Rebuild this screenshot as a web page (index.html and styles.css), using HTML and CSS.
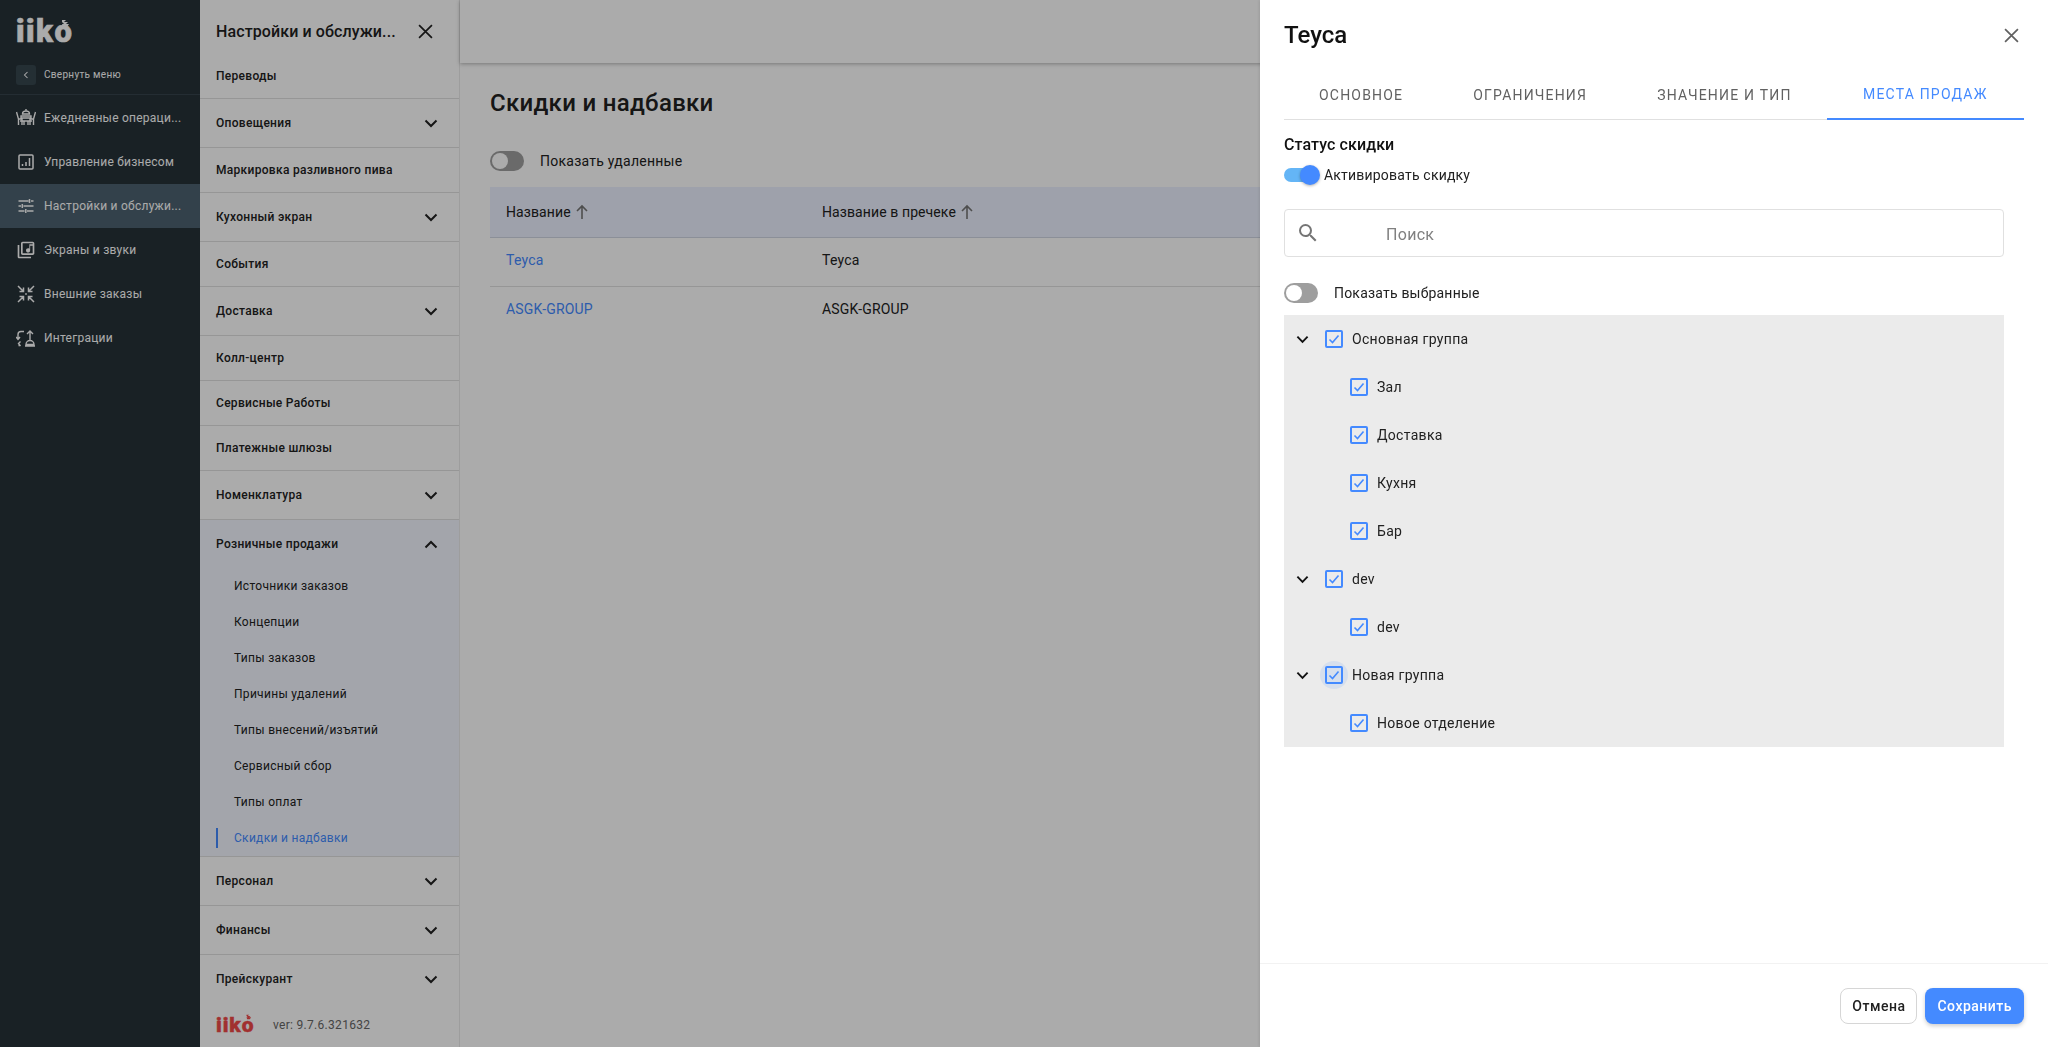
FILE: index.html
```html
<!DOCTYPE html>
<html lang="ru">

<head>
    <meta charset="UTF-8">
    <title>Скидки и надбавки</title>
    <link rel="stylesheet" href="styles.css">
</head>

<body>
    <svg class="sprite" width="0" height="0">
        <symbol id="chevron-down" viewBox="0 0 14 9">
            <path d="M1.5 1.5 7 7l5.5-5.5" fill="none" stroke="currentColor" stroke-width="2" />
        </symbol>
        <symbol id="chevron-up" viewBox="0 0 14 9">
            <path d="M1.5 7.5 7 2l5.5 5.5" fill="none" stroke="currentColor" stroke-width="2" />
        </symbol>
        <symbol id="cross" viewBox="0 0 14 14">
            <path d="M1 1l12 12M13 1 1 13" fill="none" stroke="currentColor" stroke-width="1.6" />
        </symbol>
        <symbol id="check" viewBox="0 0 14 14">
            <path d="M2.5 7.5l3 3 6-7" fill="none" stroke="currentColor" stroke-width="1.6" />
        </symbol>
        <symbol id="arrow-up" viewBox="0 0 14 16">
            <path d="M7 15V2M2 7l5-5 5 5" fill="none" stroke="currentColor" stroke-width="1.6" />
        </symbol>
        <symbol id="logo-mark" viewBox="0 0 10 12">
            <path d="M2 1h4L4 3h4L6 5h3L7 8H3L2 5h2L2 3z" fill="currentColor" />
        </symbol>
    </svg>

    <div class="app">
        <aside class="sidebar">
            <div class="logo">iiko<svg class="logo-mark"><use href="#logo-mark" /></svg></div>
            <div class="collapse">
                <span class="collapse-btn"><svg viewBox="0 0 8 10" width="6" height="8">
                        <path d="M6 1 2 5l4 4" fill="none" stroke="currentColor" stroke-width="1.4" /></svg></span>
                <span>Свернуть меню</span>
            </div>
            <nav class="side-nav">
                <a class="side-item">
                    <svg class="side-icon" viewBox="0 0 20 20">
                        <path d="M10 1v2M6.5 6a3.5 3 0 0 1 7 0zM5 8h10v2H5zM0.5 4l2 7v6M19.5 4l-2 7v6M2.500 11H6v6M17.500 11H14v6M4 13h12M8 13v4M12 13v4" fill="none" stroke="currentColor" stroke-width="1.4" />
                    </svg>
                    <span class="side-label">Ежедневные операци...</span>
                </a>
                <a class="side-item">
                    <svg class="side-icon" viewBox="0 0 20 20">
                        <rect x="3" y="3" width="14" height="14" rx="1" fill="none" stroke="currentColor" stroke-width="1.500" />
                        <path d="M6.500 12v2M10 10v4M13.500 6v8" fill="none" stroke="currentColor" stroke-width="1.500" />
                    </svg>
                    <span class="side-label">Управление бизнесом</span>
                </a>
                <a class="side-item active">
                    <svg class="side-icon" viewBox="0 0 20 20">
                        <path d="M2.500 5h10M15 5h2.500M2.500 10H5M7.500 10h10M2.500 15h6M11 15h6.500M13.500 3v4M6.300 8v4M9.800 13v4" fill="none" stroke="currentColor" stroke-width="1.500" />
                    </svg>
                    <span class="side-label">Настройки и обслужи...</span>
                </a>
                <a class="side-item">
                    <svg class="side-icon" viewBox="0 0 24 24">
                        <path d="M20 2H8c-1.100 0-2 .9-2 2v12c0 1.100.9 2 2 2h12c1.100 0 2-.9 2-2V4c0-1.100-.9-2-2-2zm0 14H8V4h12v12zm-5.500-1c1.380 0 2.500-1.120 2.500-2.500V7h3V5h-4v5.510c-.42-.32-.93-.51-1.500-.51-1.380 0-2.500 1.120-2.500 2.500s1.120 2.500 2.500 2.500zM4 6H2v14c0 1.100.9 2 2 2h14v-2H4V6z" fill="currentColor" />
                    </svg>
                    <span class="side-label">Экраны и звуки</span>
                </a>
                <a class="side-item">
                    <svg class="side-icon" viewBox="0 0 20 20">
                        <path d="M2 2l5.500 5.500M7.500 3.500v4h-4M18 2l-5.500 5.500M12.500 3.500v4h4M2 18l5.500-5.500M7.500 16.500v-4h-4M18 18l-5.500-5.500M12.500 16.500v-4h4" fill="none" stroke="currentColor" stroke-width="1.500" />
                        <rect x="9.200" y="9.200" width="1.600" height="1.600" fill="currentColor" />
                    </svg>
                    <span class="side-label">Внешние заказы</span>
                </a>
                <a class="side-item">
                    <svg class="side-icon" viewBox="0 0 20 20">
                        <path d="M8 3.500H5a3 3 0 0 0-3 3V11M0 9l2 2.500L4 9M4 17.500H2.500M10 16.500a4 4 0 0 1 8 0zM9 18h10M14 12.500V3M11 6l3-3 3 3M4.500 13.500l-2 2 2 2.500" fill="none" stroke="currentColor" stroke-width="1.400" />
                    </svg>
                    <span class="side-label">Интеграции</span>
                </a>
            </nav>
        </aside>

        <section class="subnav">
            <div class="subnav-head">
                <span class="subnav-title">Настройки и обслужи...</span>
                <svg class="subnav-close"><use href="#cross" /></svg>
            </div>
            <div class="row">Переводы</div>
            <div class="row tall">Оповещения<svg class="chevron"><use href="#chevron-down" /></svg></div>
            <div class="row">Маркировка разливного пива</div>
            <div class="row tall">Кухонный экран<svg class="chevron"><use href="#chevron-down" /></svg></div>
            <div class="row">События</div>
            <div class="row tall">Доставка<svg class="chevron"><use href="#chevron-down" /></svg></div>
            <div class="row">Колл-центр</div>
            <div class="row">Сервисные Работы</div>
            <div class="row">Платежные шлюзы</div>
            <div class="row tall">Номенклатура<svg class="chevron"><use href="#chevron-down" /></svg></div>
            <div class="group">
                <div class="row tall open">Розничные продажи<svg class="chevron"><use href="#chevron-up" /></svg></div>
                <a class="sub-row">Источники заказов</a>
                <a class="sub-row">Концепции</a>
                <a class="sub-row">Типы заказов</a>
                <a class="sub-row">Причины удалений</a>
                <a class="sub-row">Типы внесений/изъятий</a>
                <a class="sub-row">Сервисный сбор</a>
                <a class="sub-row">Типы оплат</a>
                <a class="sub-row current">Скидки и надбавки</a>
            </div>
            <div class="row tall">Персонал<svg class="chevron"><use href="#chevron-down" /></svg></div>
            <div class="row tall">Финансы<svg class="chevron"><use href="#chevron-down" /></svg></div>
            <div class="row tall last">Прейскурант<svg class="chevron"><use href="#chevron-down" /></svg></div>
            <div class="subnav-foot">
                <span class="foot-logo">iiko<svg class="foot-mark"><use href="#logo-mark" /></svg></span>
                <span>ver: 9.7.6.321632</span>
            </div>
        </section>

        <main class="content">
            <div class="topbar"></div>
            <div class="page">
                <h1 class="page-title">Скидки и надбавки</h1>
                <label class="switch-line">
                    <span class="switch"></span>
                    <span>Показать удаленные</span>
                </label>
                <table class="grid">
                    <thead>
                        <tr>
                            <th class="col-name">Название<svg class="sort"><use href="#arrow-up" /></svg></th>
                            <th>Название в пречеке<svg class="sort"><use href="#arrow-up" /></svg></th>
                        </tr>
                    </thead>
                    <tbody>
                        <tr>
                            <td><a class="link">Теуса</a></td>
                            <td>Теуса</td>
                        </tr>
                        <tr>
                            <td><a class="link">ASGK-GROUP</a></td>
                            <td>ASGK-GROUP</td>
                        </tr>
                    </tbody>
                </table>
            </div>
        </main>
    </div>

    <div class="scrim"></div>

    <aside class="drawer">
        <header class="drawer-head">
            <h2 class="drawer-title">Теуса</h2>
            <svg class="drawer-close"><use href="#cross" /></svg>
        </header>
        <div class="tabs">
            <a class="tab">Основное</a>
            <a class="tab">Ограничения</a>
            <a class="tab">Значение и тип</a>
            <a class="tab selected">Места продаж</a>
        </div>
        <div class="drawer-body">
            <h3 class="status-title">Статус скидки</h3>
            <label class="status-line">
                <span class="switch-on"></span>
                <span>Активировать скидку</span>
            </label>
            <div class="search">
                <svg class="search-icon" viewBox="0 0 24 24">
                    <path d="M15.500 14h-.79l-.28-.27A6.470 6.470 0 0 0 16 9.500 6.500 6.500 0 1 0 9.500 16c1.610 0 3.090-.59 4.230-1.570l.27.28v.79l5 4.990L20.490 19l-4.990-5zm-6 0C7.010 14 5 11.990 5 9.500S7.010 5 9.500 5 14 7.010 14 9.500 11.990 14 9.500 14z" fill="currentColor" />
                </svg>
                <span class="search-text">Поиск</span>
            </div>
            <label class="selected-line">
                <span class="switch"></span>
                <span>Показать выбранные</span>
            </label>
            <div class="tree">
                <div class="tree-row">
                    <svg class="tree-chevron"><use href="#chevron-down" /></svg>
                    <span class="box"><svg><use href="#check" /></svg></span>Основная группа
                </div>
                <div class="tree-row child"><span class="box"><svg><use href="#check" /></svg></span>Зал</div>
                <div class="tree-row child"><span class="box"><svg><use href="#check" /></svg></span>Доставка</div>
                <div class="tree-row child"><span class="box"><svg><use href="#check" /></svg></span>Кухня</div>
                <div class="tree-row child"><span class="box"><svg><use href="#check" /></svg></span>Бар</div>
                <div class="tree-row">
                    <svg class="tree-chevron"><use href="#chevron-down" /></svg>
                    <span class="box"><svg><use href="#check" /></svg></span>dev
                </div>
                <div class="tree-row child"><span class="box"><svg><use href="#check" /></svg></span>dev</div>
                <div class="tree-row">
                    <svg class="tree-chevron"><use href="#chevron-down" /></svg>
                    <span class="box focused"><svg><use href="#check" /></svg></span>Новая группа
                </div>
                <div class="tree-row child"><span class="box"><svg><use href="#check" /></svg></span>Новое отделение</div>
            </div>
        </div>
        <footer class="drawer-foot">
            <button class="btn">Отмена</button>
            <button class="btn primary">Сохранить</button>
        </footer>
    </aside>
</body>

</html>
```

FILE: styles.css
```css
html,
body {
    margin: 0;
    padding: 0;
    height: 100%;
    overflow: hidden;
}

body {
    font-family: Roboto, "Liberation Sans", sans-serif;
    font-size: 14px;
    color: #212121;
    background: #fff;
}

.sprite {
    position: absolute;
}

.app {
    display: flex;
    height: 1047px;
}

/* left dark menu */
.sidebar {
    width: 200px;
    flex: none;
    background: #263238;
    color: #fff;
}

.logo {
    height: 65px;
    padding: 14px 0 0 16px;
    box-sizing: border-box;
    font-weight: 900;
    font-size: 31px;
    line-height: 35px;
    letter-spacing: 1.5px;
    -webkit-text-stroke: 0.6px #fff;
    position: relative;
}

.logo-mark {
    position: absolute;
    left: 60px;
    top: 19px;
    width: 10px;
    height: 12px;
}

.collapse {
    display: flex;
    align-items: center;
    gap: 8px;
    height: 30px;
    padding: 0 0 9px 16px;
    font-size: 10px;
    letter-spacing: 0.3px;
    line-height: 20px;
    border-bottom: 1px solid #36444d;
    box-sizing: border-box;
    color: #fff;
}

.collapse-btn {
    display: flex;
    align-items: center;
    justify-content: center;
    width: 20px;
    height: 20px;
    background: #36464e;
    border-radius: 3px;
}

.side-nav {
    padding-top: 1px;
}

.side-item {
    display: flex;
    align-items: center;
    height: 44px;
    padding-left: 16px;
    color: #fff;
}

.side-item.active {
    background: #4d6270;
}

.side-icon {
    width: 20px;
    height: 20px;
    flex: none;
    margin-right: 8px;
}

.side-label {
    white-space: nowrap;
    font-size: 12px;
    letter-spacing: 0.25px;
}

/* second column */
.subnav {
    width: 260px;
    flex: none;
    border-right: 1px solid #eaeaea;
    box-sizing: border-box;
    background: #fff;
    display: flex;
    flex-direction: column;
}

.subnav-head {
    display: flex;
    align-items: center;
    justify-content: space-between;
    height: 54px;
    padding: 9px 26px 0 16px;
    box-sizing: border-box;
}

.subnav-title {
    white-space: nowrap;
    font-size: 16px;
    font-weight: 500;
    letter-spacing: 0.1px;
}

.subnav-close {
    width: 15px;
    height: 15px;
    color: #212121;
}

.row {
    display: flex;
    align-items: center;
    justify-content: space-between;
    height: 45px;
    box-sizing: border-box;
    padding: 0 16px;
    border-bottom: 1px solid #e0e0e0;
    font-size: 12px;
    font-weight: 500;
    letter-spacing: 0.3px;
}

.row.tall {
    height: 49px;
}

.row.open {
    border-bottom: 0;
    height: 48px;
}

.row.last {
    border-bottom: 0;
    height: 48px;
}

.chevron {
    width: 14px;
    height: 9px;
    margin-right: 5px;
    color: #212121;
}

.group {
    background: #f3f7ff;
    border-bottom: 1px solid #e0e0e0;
    height: 337px;
    box-sizing: border-box;
}

.sub-row {
    display: flex;
    align-items: center;
    height: 36px;
    padding-left: 34px;
    font-size: 12px;
    letter-spacing: 0.3px;
    position: relative;
}

.sub-row.current {
    color: #448aff;
}

.sub-row.current::before {
    content: "";
    position: absolute;
    left: 16px;
    top: 8px;
    width: 2px;
    height: 20px;
    background: #448aff;
}

.subnav-foot {
    display: flex;
    align-items: center;
    height: 44px;
    padding-left: 16px;
    font-size: 12px;
    letter-spacing: 0.3px;
    color: #666;
}

.foot-logo {
    position: relative;
    width: 57px;
    font-weight: 900;
    font-size: 21px;
    line-height: 24px;
    letter-spacing: 0.9px;
    -webkit-text-stroke: 0.4px #f04848;
    color: #f04848;
}

.foot-mark {
    position: absolute;
    left: 29px;
    top: 1px;
    width: 7px;
    height: 8px;
}

/* main page behind the drawer */
.content {
    flex: 1;
    min-width: 0;
    background: #fff;
}

.topbar {
    height: 63px;
    background: #fff;
    box-shadow: 0 1px 4px rgba(0, 0, 0, 0.3);
}

.page {
    padding: 0 0 0 30px;
}

.page-title {
    margin: 0;
    padding-top: 26px;
    font-size: 24px;
    line-height: 28px;
    font-weight: 500;
    letter-spacing: 0.3px;
    height: 62px;
    box-sizing: border-box;
}

.switch-line {
    display: flex;
    align-items: center;
    gap: 16px;
    margin-top: 26px;
    height: 20px;
    letter-spacing: 0.25px;
}

.switch {
    display: block;
    position: relative;
    width: 34px;
    height: 20px;
    box-sizing: border-box;
    border-radius: 10px;
    background: #9e9e9e;
}

.switch::before {
    content: "";
    position: absolute;
    left: 2px;
    top: 2px;
    width: 16px;
    height: 16px;
    border-radius: 50%;
    background: #fff;
}

.grid {
    width: 1100px;
    margin-top: 16px;
    border-collapse: collapse;
    table-layout: fixed;
}

.grid th {
    height: 50px;
    padding: 0 16px;
    text-align: left;
    font-weight: 400;
    background: #ecf1ff;
    border-bottom: 1px solid #cfd5e3;
    letter-spacing: 0.1px;
}

.grid .col-name {
    width: 284px;
}

.grid td {
    height: 43px;
    padding: 0 16px 5px;
    border-bottom: 1px solid #e0e0e0;
    letter-spacing: 0.2px;
}

.grid tr:last-child td {
    border-bottom: 0;
}

.sort {
    width: 14px;
    height: 16px;
    margin-left: 4px;
    vertical-align: -3px;
    color: #757575;
}

.link {
    color: #448aff;
}

/* grey layer under the drawer */
.scrim {
    position: fixed;
    inset: 0;
    background: rgba(0, 0, 0, 0.33);
}

.drawer {
    position: fixed;
    top: 0;
    right: 0;
    bottom: 0;
    width: 788px;
    background: #fff;
    display: flex;
    flex-direction: column;
    box-shadow: -1px 0 3px rgba(0, 0, 0, 0.1);
}

.drawer-head {
    display: flex;
    align-items: center;
    justify-content: space-between;
    height: 70px;
    padding: 0 24px;
}

.drawer-title {
    margin: 0;
    font-size: 24px;
    font-weight: 500;
    color: #111;
}

.drawer-close {
    width: 15px;
    height: 15px;
    color: #616161;
    margin-right: 5px;
}

.tabs {
    display: flex;
    height: 50px;
    margin: 0 24px;
    box-sizing: border-box;
    border-bottom: 1px solid #e0e0e0;
}

.tab {
    display: flex;
    align-items: center;
    justify-content: center;
    padding: 0 35px 1px;
    height: 50px;
    box-sizing: border-box;
    white-space: nowrap;
    text-transform: uppercase;
    font-weight: 400;
    letter-spacing: 1.2px;
    color: #616161;
}

.tab.selected {
    color: #448aff;
    border-bottom: 2px solid #448aff;
    padding: 0;
    flex: 1;
}

.drawer-body {
    flex: 1;
    padding: 0 44px 0 24px;
}

.status-title {
    margin: 15px 0 0;
    font-size: 16px;
    line-height: 20px;
    font-weight: 500;
    letter-spacing: 0.1px;
    color: #111;
}

.status-line {
    display: flex;
    align-items: center;
    height: 20px;
    margin-top: 10px;
    letter-spacing: 0.2px;
}

.switch-on {
    display: block;
    position: relative;
    width: 32px;
    height: 14px;
    border-radius: 7px;
    background: #64b5f6;
    margin-right: 8px;
}

.switch-on::before {
    content: "";
    position: absolute;
    right: -4px;
    top: -3px;
    width: 20px;
    height: 20px;
    border-radius: 50%;
    background: #448aff;
    box-shadow: 0 1px 3px rgba(0, 0, 0, 0.3);
}

.search {
    display: flex;
    align-items: center;
    height: 48px;
    margin-top: 24px;
    box-sizing: border-box;
    border: 1px solid #e0e0e0;
    border-radius: 4px;
    padding-left: 11px;
    font-size: 16px;
    letter-spacing: 0.3px;
    color: #808080;
}

.search-icon {
    width: 24px;
    height: 24px;
    margin-right: 66px;
    color: #757575;
}

.search-text {
    padding-top: 2px;
}

.selected-line {
    display: flex;
    align-items: center;
    gap: 16px;
    height: 20px;
    margin-top: 26px;
    letter-spacing: 0.2px;
}

.tree {
    margin-top: 12px;
    background: #ebebeb;
}

.tree-row {
    display: flex;
    align-items: center;
    height: 48px;
    padding-left: 12px;
    letter-spacing: 0.3px;
}

.tree-row.child {
    padding-left: 66px;
}

.tree-chevron {
    width: 13px;
    height: 9px;
    margin-right: 16px;
    color: #111;
}

.box {
    display: block;
    position: relative;
    width: 18px;
    height: 18px;
    flex: none;
    box-sizing: border-box;
    border: 2px solid #448aff;
    border-radius: 2px;
    margin-right: 9px;
    color: #448aff;
}

.box svg {
    display: block;
    width: 14px;
    height: 14px;
}

.box.focused::before {
    content: "";
    position: absolute;
    left: -7px;
    top: -7px;
    width: 28px;
    height: 28px;
    border-radius: 50%;
    background: rgba(68, 138, 255, 0.12);
}

.drawer-foot {
    display: flex;
    justify-content: flex-end;
    align-items: center;
    gap: 8px;
    height: 84px;
    padding: 0 24px 0 0;
    border-top: 1px solid #f2f2f2;
    box-sizing: border-box;
}

.btn {
    height: 36px;
    padding: 0 11px;
    border: 1px solid #d6d6d6;
    border-radius: 8px;
    background: #fff;
    font-family: Roboto, sans-serif;
    font-size: 14px;
    font-weight: 500;
    letter-spacing: 0.5px;
    color: #212121;
}

.btn.primary {
    border: 0;
    padding: 0 12px;
    background: #448aff;
    color: #fff;
    box-shadow: 0 2px 4px rgba(0, 0, 0, 0.2);
}
```
